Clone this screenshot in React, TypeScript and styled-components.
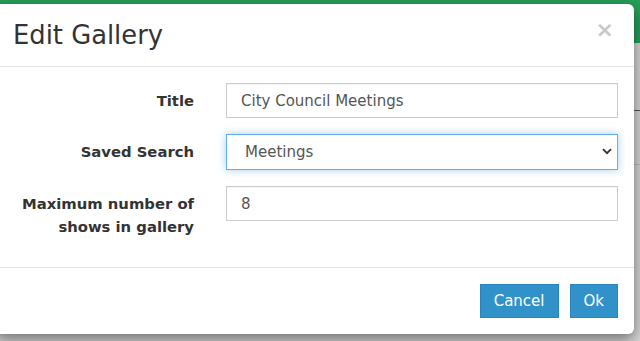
import styled, { createGlobalStyle } from "styled-components";

const GlobalStyle = createGlobalStyle`
  html, body {
    margin: 0;
    padding: 0;
    background: #d6d6d6;
    font-family: "DejaVu Sans", Verdana, sans-serif;
    overflow: hidden;
  }
  * { box-sizing: border-box; }
`;

const Page = styled.div`
  position: relative;
  width: 640px;
  height: 341px;
  overflow: hidden;
`;

const TopBar = styled.div`
  height: 43px;
  background: #26a05a;
`;

const PageToolbar = styled.div`
  height: 68px;
  border-bottom: 1px solid #555;
`;

const PageRow = styled.div`
  height: 54px;
  border-bottom: 1px solid #bdbdbd;
`;

const Modal = styled.div`
  position: absolute;
  top: 4px;
  left: -6px;
  width: 640px;
  background: #fff;
  border-radius: 6px;
  box-shadow: 0 5px 15px rgba(0, 0, 0, 0.5);
  display: flex;
  flex-direction: column;
`;

const Header = styled.div`
  height: 63px;
  padding: 0 20px 0 19px;
  border-bottom: 1px solid #e5e5e5;
  display: flex;
  align-items: center;
  justify-content: space-between;
`;

const Title = styled.h4`
  margin: 0;
  font-size: 25.8px;
  font-weight: normal;
  line-height: 1.1;
  color: #333;
`;

const Close = styled.button`
  border: 0;
  background: none;
  padding: 0;
  margin-bottom: 10px;
  font-family: "DejaVu Sans", sans-serif;
  font-size: 22px;
  font-weight: bold;
  line-height: 1;
  color: #c8c8c8;
  cursor: pointer;
`;

const Body = styled.div`
  padding: 16px 16px 29px 22px;
  display: flex;
  flex-direction: column;
  gap: 16px;
`;

const Row = styled.div`
  display: grid;
  grid-template-columns: 1fr 392px;
  column-gap: 32px;
  align-items: start;
`;

const Label = styled.label`
  text-align: right;
  font-size: 14.8px;
  font-weight: bold;
  line-height: 23px;
  padding-top: 6px;
  color: #333;
`;

const TextInput = styled.input`
  width: 100%;
  height: 35px;
  padding: 0 14px;
  border: 1px solid #ccc;
  border-radius: 0;
  font-family: "DejaVu Sans", sans-serif;
  font-size: 15px;
  color: #555;
  outline: none;
  box-shadow: inset 0 1px 1px rgba(0, 0, 0, 0.04);
`;

const SelectWrap = styled.div`
  position: relative;
`;

const Select = styled.select`
  width: 100%;
  height: 36px;
  padding: 0 18px;
  border: 1px solid #66afe9;
  border-radius: 0;
  background: #fff;
  appearance: none;
  font-family: "DejaVu Sans", sans-serif;
  font-size: 15px;
  color: #555;
  outline: none;
  box-shadow: 0 0 8px rgba(102, 175, 233, 0.6);
`;

const Chevron = styled.svg`
  position: absolute;
  right: 6px;
  top: 14px;
  pointer-events: none;
`;

const Footer = styled.div`
  border-top: 1px solid #e5e5e5;
  padding: 16px 16px 16px;
  display: flex;
  justify-content: flex-end;
  gap: 11px;
`;

const Button = styled.button`
  height: 34px;
  padding: 0 13px;
  border: 1px solid #2b83bd;
  border-radius: 0;
  background: #3192c9;
  color: #fff;
  font-family: "DejaVu Sans", sans-serif;
  font-size: 15px;
  cursor: pointer;
`;

export default function App() {
  return (
    <Page>
      <GlobalStyle />
      <TopBar />
      <PageToolbar />
      <PageRow />
      <Modal>
        <Header>
          <Title>Edit Gallery</Title>
          <Close aria-label="Close">×</Close>
        </Header>
        <Body>
          <Row>
            <Label>Title</Label>
            <TextInput defaultValue="City Council Meetings" />
          </Row>
          <Row>
            <Label>Saved Search</Label>
            <SelectWrap>
              <Select defaultValue="meetings">
                <option value="meetings">Meetings</option>
              </Select>
              <Chevron width="10" height="7" viewBox="0 0 10 7">
                <path
                  d="M1 1.2 L5 5.2 L9 1.2"
                  fill="none"
                  stroke="#333"
                  strokeWidth="1.9"
                />
              </Chevron>
            </SelectWrap>
          </Row>
          <Row>
            <Label>
              Maximum number of
              <br />
              shows in gallery
            </Label>
            <TextInput defaultValue="8" />
          </Row>
        </Body>
        <Footer>
          <Button>Cancel</Button>
          <Button>Ok</Button>
        </Footer>
      </Modal>
    </Page>
  );
}
